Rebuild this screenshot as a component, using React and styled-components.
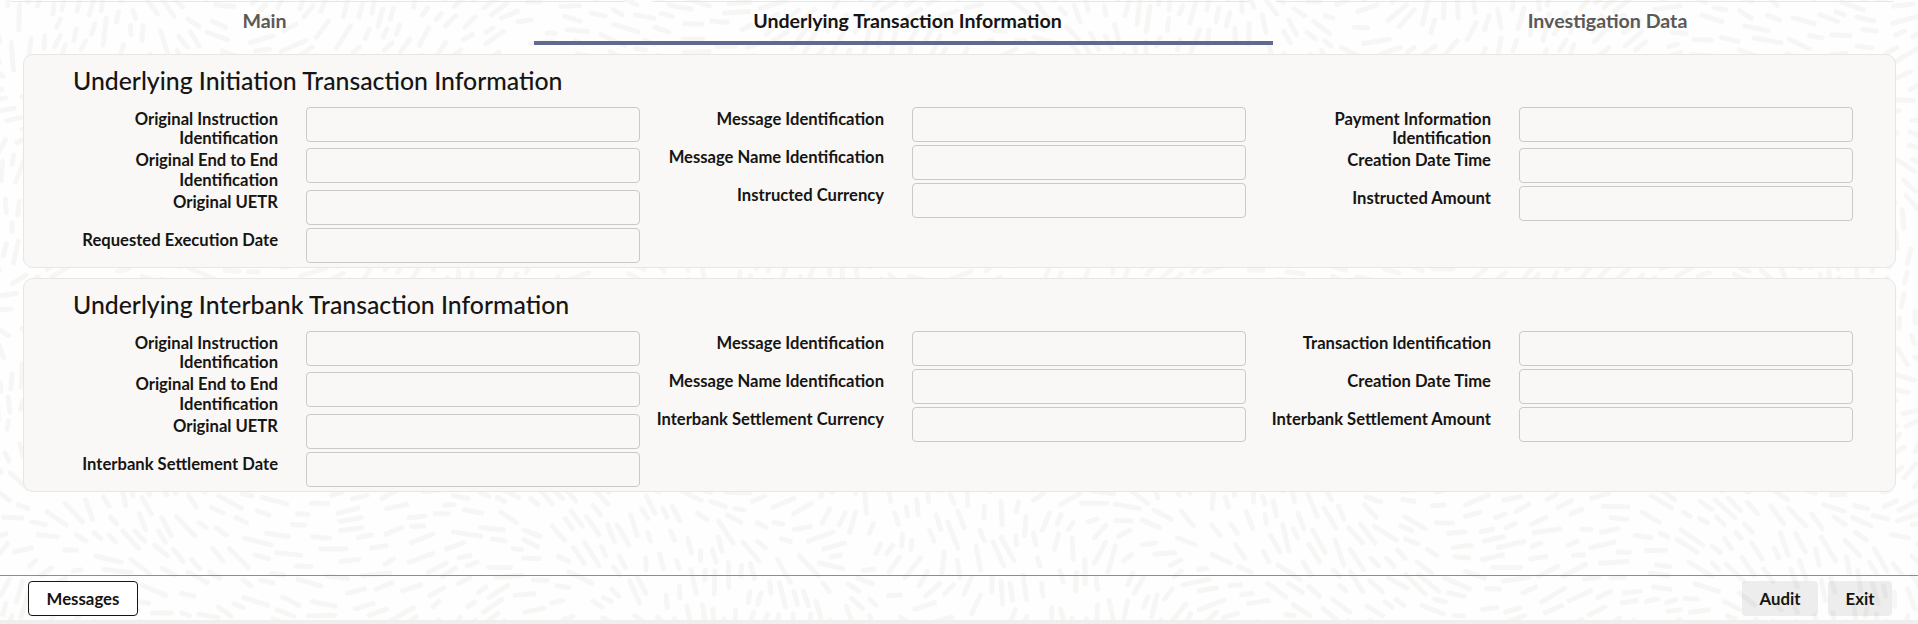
import React, { useMemo } from "react"
import styled, { createGlobalStyle } from "styled-components"

const GlobalStyle = createGlobalStyle`
  html, body { margin: 0; padding: 0; }
  body { font-family: "Lato", "Open Sans", sans-serif; color: #161513; }
`

const Page = styled.div`
  position: relative;
  width: 1918px;
  height: 624px;
  overflow: hidden;
  background: #fefefe;
  display: flex;
  flex-direction: column;
`
const Backdrop = styled.svg`
  position: absolute;
  inset: 0;
  width: 1918px;
  height: 624px;
`
const Content = styled.div`
  position: relative;
  flex: 1;
  display: flex;
  flex-direction: column;
`
const TopEdge = styled.div`
  height: 2px;
  display: grid;
  grid-template-columns: 614px 597px 618px;
  column-gap: 27px;
  padding-left: 11px;
  box-sizing: border-box;
`
const EdgePiece = styled.div`
  border-bottom: 1px solid #e8e6e3;
  height: 2px;
  box-sizing: border-box;
`
const Tabs = styled.div`
  display: flex;
  height: 43px;
`
const Tab = styled.div`
  flex: 0 0 ${(p) => p.$width}px;
  box-sizing: border-box;
  height: 43px;
  padding: 7px ${(p) => p.$right || 0}px 0 ${(p) => p.$left || 0}px;
  display: flex;
  justify-content: center;
  line-height: 24px;
  font-size: 19.6px;
  font-weight: 700;
  color: ${(p) => (p.$active ? "#161513" : "#5b5957")};
  border-bottom: 4px solid ${(p) => (p.$active ? "#5f6a8f" : "transparent")};
`
const Cards = styled.div`
  margin: 9px 22px 0 23px;
  display: flex;
  flex-direction: column;
  row-gap: 10px;
`
const Card = styled.section`
  height: 214px;
  box-sizing: border-box;
  background: #f9f8f6;
  border: 1px solid #e8e6e3;
  border-radius: 10px;
`
const Heading = styled.h2`
  margin: 0;
  padding: 11px 0 12px 49px;
  line-height: 29px;
  font-size: 24.8px;
  font-weight: 500;
  color: #161513;
`
const Columns = styled.div`
  display: grid;
  grid-template-columns: 606px 607px 606px;
`
const Column = styled.div`
  padding-left: 22px;
`
const Row = styled.div`
  display: flex;
  align-items: flex-start;
  column-gap: 28px;
  min-height: 38px;
`
const Label = styled.label`
  flex: 0 0 232px;
  padding-top: 3px;
  line-height: 19.2px;
  font-size: 16.6px;
  font-weight: 700;
  text-align: right;
  color: #161513;
`
const Input = styled.input`
  flex: 0 0 334px;
  width: 334px;
  height: 35px;
  box-sizing: border-box;
  background: #f9f8f6;
  border: 1px solid #cbc9c6;
  border-radius: 4px;
  outline: none;
`
const Footer = styled.footer`
  margin-top: auto;
  height: 45px;
  box-sizing: border-box;
  border-top: 1px solid #8f8d8a;
  padding: 5px 26px 0 28px;
  display: flex;
  justify-content: space-between;
`
const FooterGroup = styled.div`
  display: flex;
  column-gap: 10px;
`
const Button = styled.button`
  height: 35px;
  width: ${(p) => p.$width}px;
  padding: 0;
  box-sizing: border-box;
  font-family: inherit;
  font-size: 16.8px;
  font-weight: 700;
  color: #161513;
  border-radius: 4px;
  border: ${(p) => (p.$outlined ? "1px solid #161513" : "none")};
  background: ${(p) => (p.$outlined ? "#ffffff" : "rgba(22, 21, 19, 0.07)")};
`
const BottomEdge = styled.div`
  position: relative;
  height: 4px;
  background: #f1efed;
`

const sections = [
  {
    title: "Underlying Initiation Transaction Information",
    columns: [
      [
        "Original Instruction Identification",
        "Original End to End Identification",
        "Original UETR",
        "Requested Execution Date",
      ],
      ["Message Identification", "Message Name Identification", "Instructed Currency"],
      ["Payment Information Identification", "Creation Date Time", "Instructed Amount"],
    ],
  },
  {
    title: "Underlying Interbank Transaction Information",
    columns: [
      [
        "Original Instruction Identification",
        "Original End to End Identification",
        "Original UETR",
        "Interbank Settlement Date",
      ],
      ["Message Identification", "Message Name Identification", "Interbank Settlement Currency"],
      ["Transaction Identification", "Creation Date Time", "Interbank Settlement Amount"],
    ],
  },
]

// rice grain wallpaper, seeded so that every render gives the same picture
const makeGrains = () => {
  let seed = 20240611
  const rand = () => {
    seed = (seed + 0x6d2b79f5) | 0
    let t = Math.imul(seed ^ (seed >>> 15), 1 | seed)
    t = (t + Math.imul(t ^ (t >>> 7), 61 | t)) ^ t
    return ((t ^ (t >>> 14)) >>> 0) / 4294967296
  }
  const cell = 12
  const taken = new Map()
  const isFree = (x, y) => {
    const cx = Math.floor(x / cell)
    const cy = Math.floor(y / cell)
    for (let i = -1; i <= 1; i++) {
      for (let j = -1; j <= 1; j++) {
        const list = taken.get(`${cx + i},${cy + j}`)
        if (list && list.some((q) => Math.hypot(q[0] - x, q[1] - y) < 8.5)) return false
      }
    }
    return true
  }
  const grains = []
  for (let n = 0; n < 30000; n++) {
    const px = rand() * 1930 - 6
    const py = rand() * 636 - 6
    const a =
      Math.sin(px / 90 + Math.cos(py / 70)) * 1.1 +
      Math.cos(py / 60 - px / 170) * 0.8 +
      (rand() - 0.5) * 0.45
    const len = 4 + rand() * 10
    const dx = Math.cos(a) * len
    const dy = Math.sin(a) * len
    const pts = [-1, -0.5, 0, 0.5, 1].map((k) => [px + dx * k, py + dy * k])
    if (!pts.every((q) => isFree(q[0], q[1]))) continue
    pts.forEach((q) => {
      const k = `${Math.floor(q[0] / cell)},${Math.floor(q[1] / cell)}`
      taken.set(k, [...(taken.get(k) || []), q])
    })
    grains.push({
      d: `M${px - dx} ${py - dy}L${px + dx} ${py + dy}`,
      key: n,
    })
  }
  return grains
}

const Section = ({ title, columns }) => (
  <Card>
    <Heading>{title}</Heading>
    <Columns>
      {columns.map((labels, i) => (
        <Column key={i}>
          {labels.map((text) => (
            <Row key={text}>
              <Label>{text}</Label>
              <Input readOnly />
            </Row>
          ))}
        </Column>
      ))}
    </Columns>
  </Card>
)

const App = () => {
  const grains = useMemo(makeGrains, [])
  return (
    <Page>
      <GlobalStyle />
      <Backdrop viewBox="0 0 1918 624" aria-hidden="true">
        <g fill="none" stroke="#f6f6f5" strokeWidth="5" strokeLinecap="round">
          {grains.map((g) => (
            <path key={g.key} d={g.d} />
          ))}
        </g>
      </Backdrop>
      <Content>
        <TopEdge>
          <EdgePiece />
          <EdgePiece />
          <EdgePiece />
        </TopEdge>
        <Tabs>
          <Tab $width={534} $right={5}>Main</Tab>
          <Tab $width={739} $left={8} $active>Underlying Transaction Information</Tab>
          <Tab $width={645} $left={24}>Investigation Data</Tab>
        </Tabs>
        <Cards>
          {sections.map((s) => (
            <Section key={s.title} title={s.title} columns={s.columns} />
          ))}
        </Cards>
        <Footer>
          <Button $outlined $width={110}>Messages</Button>
          <FooterGroup>
            <Button $width={76}>Audit</Button>
            <Button $width={64}>Exit</Button>
          </FooterGroup>
        </Footer>
      </Content>
      <BottomEdge />
    </Page>
  )
}

export default App
